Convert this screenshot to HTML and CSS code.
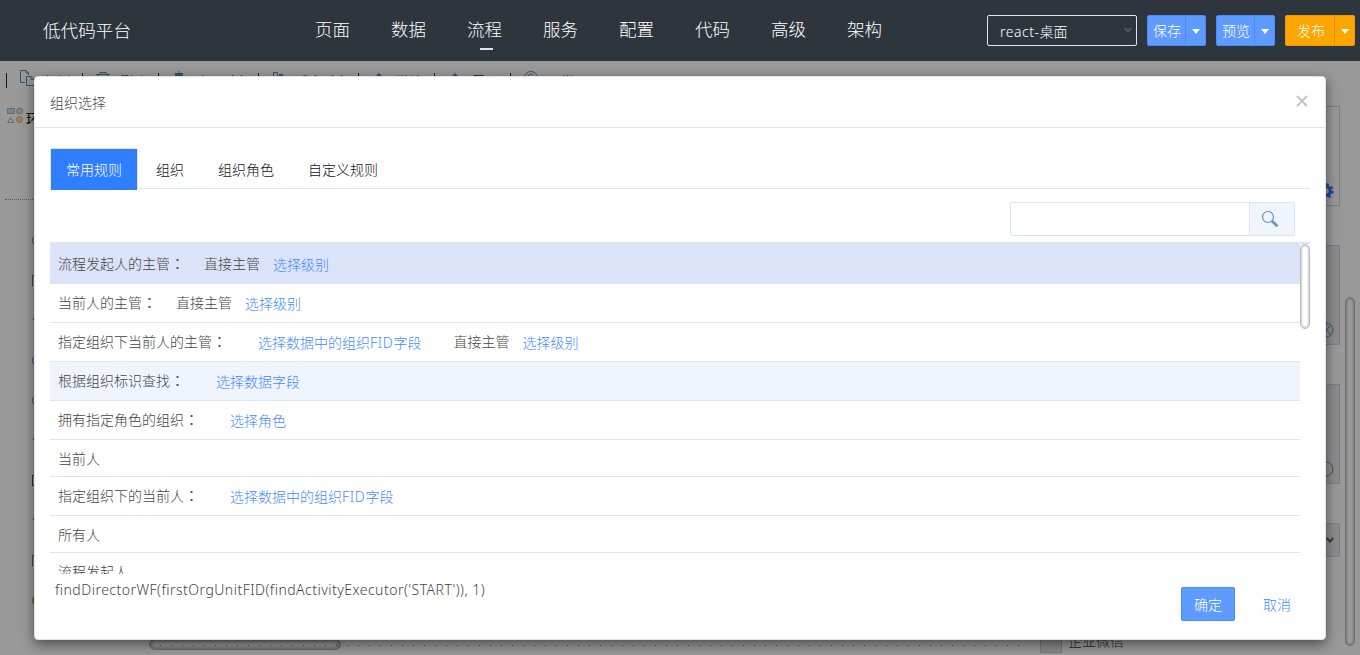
FILE: index.html
```html
<!DOCTYPE html>
<html lang="zh-CN">
<head>
<meta charset="utf-8">
<title>低代码平台</title>
<link rel="stylesheet" href="styles.css">
</head>
<body>
<header class="topbar">
  <div class="brand">低代码平台</div>
  <nav class="menu">
    <a>页面</a><a>数据</a><a class="current">流程</a><a>服务</a><a>配置</a><a>代码</a><a>高级</a><a>架构</a>
  </nav>
  <div class="actions">
    <div class="platform"><span><span class="latin">react-</span>桌面</span><svg width="8" height="6" viewBox="0 0 8 6"><path d="M.8 1 4 4.6 7.2 1" fill="none" stroke="#5c6166" stroke-width="1.6"/></svg></div>
    <div class="split"><span>保存</span><i><b></b></i></div>
    <div class="split"><span>预览</span><i><b></b></i></div>
    <div class="split publish"><span>发布</span><i><b></b></i></div>
  </div>
</header>
<main class="workspace">
  <div class="toolbar">
    <div class="tool"><svg width="16" height="16" viewBox="0 0 16 16"><path d="M6 12.500H1.500V.5H7L9.500 3v2M7 .5V3h2.500M7.500 6.500h5l3 3v6h-8zM12 6.500v3h3" /></svg><span>复制</span></div>
    <div class="tool"><svg width="16" height="16" viewBox="0 0 16 16"><path d="M1 3.500h14M5 3V1.500h6V3M3 4v11h10V4M6.500 6v6M9.500 6v6"/></svg><span>删除</span></div>
    <div class="tool wide"><svg width="16" height="16" viewBox="0 0 16 16"><path class="solid" d="M4 2h8v4H4zM2 9h12v4H2zM7.500 0h1v16h-1z"/></svg><span>水平对齐</span></div>
    <div class="tool wide"><svg width="16" height="16" viewBox="0 0 16 16"><path d="M2.500 1.500h4v13h-4z"/><path class="solid" d="M8 3h4v9H8z"/></svg><span>垂直对齐</span></div>
    <div class="tool"><svg width="16" height="16" viewBox="0 0 16 16"><path class="solid" d="m8 2 6 6h-4v7H6V8H2z"/></svg><span>撤销</span></div>
    <div class="tool"><svg width="16" height="16" viewBox="0 0 16 16"><path class="solid" d="m8 2 6 6h-4v7H6V8H2z"/></svg><span>置顶</span></div>
    <div class="tool"><svg width="16" height="16" viewBox="0 0 16 16"><circle cx="8" cy="7" r="6.500"/><path d="M5 5c1-2 4-2 5-1"/></svg><span>正常</span></div>
  </div>
  <div class="panes">
    <aside class="palette">
      <div class="group"><svg width="16" height="17" viewBox="0 0 16 17"><path fill="#c8dce8" stroke="#9fb2c4" d="M.5 1.500h7v5h-7z"/><circle cx="12.500" cy="4" r="3" fill="#d3e2ed" stroke="#9fb2c4"/><path fill="none" stroke="#9fb2c4" d="M.7 15.500 3.700 10.500l3 5z"/><circle cx="12.500" cy="12.500" r="3" fill="#f6dfae" stroke="#dcae61"/></svg><span>环节</span></div>
      <div class="shapes"><i class="round"></i><i></i><i class="tip"></i><i class="round"></i><i class="round"></i><i class="tip"></i><i class="dark"></i><i class="tip"></i><i></i><i class="round gold"></i></div>
    </aside>
    <section class="canvas"><div class="dots"></div><div class="hscroll"></div></section>
    <aside class="props">
      <div class="field plain"><svg width="16" height="16" viewBox="-8 -8 16 16"><circle r="4.300" fill="none" stroke-width="3.200"/><circle r="6.600" fill="none" stroke-width="2.400" stroke-dasharray="2.700 2.480"/></svg></div>
      <div class="field"><svg width="16" height="16" viewBox="0 0 16 16"><circle cx="8" cy="8" r="7"/><path d="m4 4 8 8M12 4l-8 8M8 1v3"/></svg></div>
      <div class="field"><svg width="16" height="16" viewBox="0 0 16 16"><circle cx="8" cy="8" r="7"/></svg></div>
      <div class="field short"><svg width="8" height="6" viewBox="0 0 8 6"><path class="chev" d="M.8 1 4 4.600 7.200 1"/></svg></div>
      <div class="check"><i></i><span>企业微信</span></div>
    </aside>
    <div class="vscroll"></div>
  </div>
</main>
<div class="mask"></div>
<section class="dialog">
  <div class="dialog-head"><span>组织选择</span><svg width="12" height="12" viewBox="0 0 12 12"><path d="m1 1 10 10M11 1 1 11" stroke="#c4c4c4" stroke-width="2"/></svg></div>
  <div class="dialog-body">
    <div class="tabs"><span class="active">常用规则</span><span>组织</span><span>组织角色</span><span>自定义规则</span></div>
    <div class="searchline"><div class="search"><div class="box"></div><div class="btn"><svg width="18" height="18" viewBox="0 0 18 18"><circle cx="7" cy="7" r="5.500" fill="none" stroke="#6c93b8" stroke-width="1.200"/><path d="m11 11 5.500 5.300" stroke="#6c93b8" stroke-width="2.600"/></svg></div></div></div>
    <div class="list">
      <div class="rows">
        <div class="row selected"><span>流程发起人的主管</span><b>：</b><span class="g20">直接主管</span><a class="g12">选择级别</a></div>
        <div class="row"><span>当前人的主管</span><b>：</b><span class="g20">直接主管</span><a class="g12">选择级别</a></div>
        <div class="row"><span>指定组织下当前人的主管</span><b>：</b><a class="g32">选择数据中的组织<em>FID</em>字段</a><span class="g32">直接主管</span><a class="g12">选择级别</a></div>
        <div class="row hover"><span>根据组织标识查找</span><b>：</b><a class="g32">选择数据字段</a></div>
        <div class="row"><span>拥有指定角色的组织</span><b>：</b><a class="g32">选择角色</a></div>
        <div class="row low"><span>当前人</span></div>
        <div class="row"><span>指定组织下的当前人</span><b>：</b><a class="g32">选择数据中的组织<em>FID</em>字段</a></div>
        <div class="row low"><span>所有人</span></div>
        <div class="row low"><span>流程发起人</span></div>
      </div>
      <div class="thumb"></div>
    </div>
    <div class="foot"><div class="expr">findDirectorWF(firstOrgUnitFID(findActivityExecutor('START')), 1)</div><div class="ok">确定</div><div class="cancel">取消</div></div>
  </div>
</section>
</body>
</html>
```
FILE: styles.css
```css
* { box-sizing: border-box; }
body {
  margin: 0;
  width: 1360px;
  height: 655px;
  overflow: hidden;
  position: relative;
  display: flex;
  flex-direction: column;
  font: 300 14px/20px "Noto Sans", "Noto Sans CJK SC", sans-serif;
  color: #444;
  background: #fff;
}
svg { display: block; flex: none; }

/* Top bar */
.topbar {
  height: 61px;
  flex: none;
  display: flex;
  background: #2e353d;
  color: #fff;
  position: relative;
  z-index: 2;
}
.brand { width: 315px; padding: 17px 0 0 43px; font-size: 17.6px; line-height: 26px; }
.menu { display: flex; gap: 41px; width: 672px; font-size: 17.500px; line-height: 26px; padding-top: 16px; }
.menu a { width: 35px; height: 33px; white-space: nowrap; }
.menu .current::after { content: ""; display: block; width: 13px; height: 2px; margin: 6px 0 0 13px; background: #dfe3f3; }
.actions { display: flex; gap: 10px; padding-top: 15px; }
.platform {
  width: 150px;
  height: 31px;
  border: 1px solid #dfe3f3;
  border-radius: 2px;
  display: flex;
  justify-content: space-between;
  align-items: center;
  padding: 2px 4px 0 12px;
}
.platform svg { margin-bottom: 3px; }
.latin { letter-spacing: .5px; }
.split { width: 59px; height: 31px; display: flex; background: #5f9bff; border: 1px solid #468bff; border-radius: 2px; line-height: 30px; }
.split span { flex: 1; text-align: center; border-right: 1px solid #468bff; padding-left: 1px; white-space: nowrap; }
.split i { width: 19px; display: flex; align-items: center; justify-content: center; }
.split b { border: 4px solid transparent; border-top: 5px solid #fff; border-bottom: 0; margin-top: 2px; }
.publish { width: 70px; background: #ffa500; border-color: #ee9a00; }
.publish span { border-color: #e09100; padding-left: 2px; }

/* Designer area */
.workspace { flex: 1; display: flex; flex-direction: column; min-height: 0; }
.toolbar { height: 32px; display: flex; padding: 9px 0 0 6px; flex: none; font-size: 13px; font-weight: 400; color: #333; }
.tool { width: 76px; height: 24px; display: flex; padding-left: 13px; gap: 9px; }
.tool::before { content: ""; width: 1px; height: 15px; margin: 3px 0 0 -13px; background: #333; flex: none; }
.tool svg { margin-left: 3px; margin-top: 1px; }
.tool:first-child svg { margin-top: 0; }
.tool span { margin-top: 2px; line-height: 18px; white-space: nowrap; }
.wide { width: 100px; }
.tool svg path, .tool svg circle { fill: none; stroke: #5d89ab; }
.tool svg .solid { fill: #5d89ab; stroke: none; }
.panes { flex: 1; display: flex; min-height: 0; }
.palette { width: 149px; flex: none; }
.group { height: 107px; margin-left: 5px; padding: 14px 0 0 2px; display: flex; gap: 3px; border-bottom: 1px dotted #86a0d8; color: #000; font-weight: 400; }
.group span { margin-top: 2px; }
.shapes { padding: 35px 0 0 32px; display: flex; flex-direction: column; gap: 24px; }
.shapes i { width: 16px; height: 11px; border: 1px solid #5d7fab; margin-bottom: 5px; }
.shapes .round { border-radius: 8px; }
.shapes .dark { border-color: #555; }
.shapes .tip { height: 2px; margin: 3px 0 11px 1px; width: 4px; background: #7080b0; border: 0; }
.shapes .gold { border: 2px solid #d19a28; }
.canvas { flex: 1; display: flex; flex-direction: column; justify-content: flex-end; position: relative; }
.dots { height: 14px; margin-right: 14px; background: repeating-linear-gradient(90deg, #567 0 1px, transparent 1px 11px) 0 4px / 100% 1px no-repeat; }
.hscroll { position: absolute; left: 0; bottom: 5px; width: 192px; height: 11px; border-radius: 6px; border: 1px solid #aaa; box-shadow: inset 0 0 4px #777; }
.props { width: 300px; padding-top: 13px; display: flex; flex-direction: column; gap: 39px; }
.field { height: 100px; flex: none; background: #ebebed; border: 1px solid #d0d3df; display: flex; justify-content: flex-end; align-items: flex-end; padding: 0 5px 6px; }
.plain { background: transparent; }
.field svg circle, .field svg path { fill: none; stroke: #5d89ab; }
.field.plain svg circle { stroke: #2e7eff; }
.field.short { height: 34px; align-items: center; padding-bottom: 2px; }
.short svg { margin-top: 2px; }
.field.short svg .chev { stroke: #666; stroke-width: 2; }
.check { display: flex; gap: 6px; margin-top: 35px; }
.check i { width: 22px; height: 22px; background: #e4e4e4; border: 1px solid #ccc; }
.vscroll { width: 10px; height: 349px; margin: 204px 5px 0; border-radius: 5px; border: 1px solid #bbb; box-shadow: inset 0 0 3px #888; flex: none; }
.mask { position: absolute; inset: 61px 0 0; background: rgba(0, 0, 0, .4); }

/* Dialog */
.dialog {
  position: absolute;
  left: 34px;
  top: 76px;
  width: 1292px;
  height: 564px;
  background: #fff;
  border: 1px solid #dde3f0;
  border-radius: 4px;
  box-shadow: 0 4px 13px rgba(0, 0, 0, .52);
  z-index: 3;
}
.dialog-head { height: 51px; border-bottom: 1px solid #dfe5f2; display: flex; justify-content: space-between; padding: 16px 17px 0 15px; }
.dialog-head svg { margin-top: 2px; }
.dialog-body { padding: 20px 15px 0; display: flex; flex-direction: column; }
.tabs { height: 41px; border-bottom: 1px solid #dfe5f2; display: flex; color: #111; line-height: 43px; }
.tabs span { height: 42px; padding-right: 34px; flex: none; }
.tabs .active { width: 88px; padding: 0 0 0 15px; margin-right: 18px; background: #2e7eff; border: 1px solid #dfe5f2; border-width: 1px 1px 0; color: #fff; line-height: 41px; }
.searchline { height: 53px; display: flex; justify-content: flex-end; padding: 13px 15px 0 0; }
.search { width: 285px; height: 34px; border: 1px solid #dfe5f0; border-radius: 2px; display: flex; }
.box { flex: 1; }
.btn { width: 45px; border-left: 1px solid #dfe5f0; background: #eff4fd; padding: 7px 0 0 11px; }
.list { height: 332px; border-top: 2px solid #dfe6f0; display: flex; overflow: hidden; }
.rows { width: 1250px; }
.row { height: 39px; border-bottom: 1px solid #dfe5f0; padding: 9px 7px 0 8px; display: flex; white-space: nowrap; }
.row b { width: 14px; text-indent: 4px; font-weight: 400; margin-top: -1px; }
.row em { font-style: normal; letter-spacing: .7px; }
.row a { color: #468bff; padding-top: 1px; }
.selected { height: 40px; padding-top: 10px; background: #dbe3f8; border-color: #dbe3f8; }
.hover { background: #eff4fd; }
.low { height: 37px; }
.g12 { margin-left: 13px; }
.g20 { margin-left: 20px; }
.g32 { margin-left: 32px; }
.thumb { width: 10px; height: 85px; border: 1px solid #bbb; border-radius: 5px; background: #fff; box-shadow: inset 0 0 3px #999; }
.foot { display: flex; }
.expr { width: 1131px; padding: 6px 0 0 5px; letter-spacing: .48px; }
.ok { width: 54px; height: 34px; margin: 13px 28px 0 0; border: 1px solid #468bff; border-radius: 2px; background: #5f9bff; color: #fff; line-height: 34px; text-align: center; }
.cancel { padding-top: 21px; color: #468bff; }
```
